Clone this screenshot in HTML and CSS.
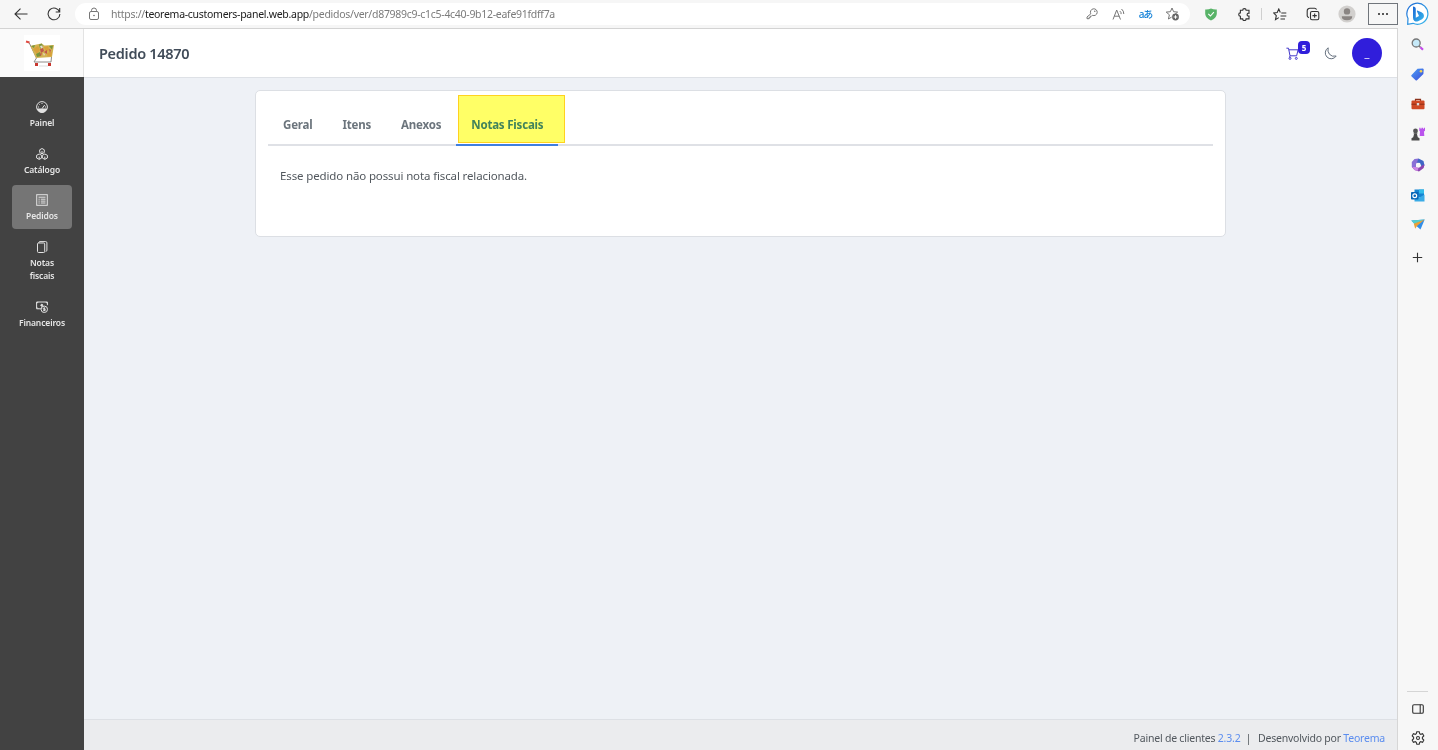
FILE: index.html
```html
<!DOCTYPE html>
<html lang="pt-BR">

<head>
    <meta charset="UTF-8">
    <meta name="viewport" content="width=device-width, initial-scale=1.0">
    <title>Pedido 14870</title>
    <link rel="stylesheet" href="styles.css">
</head>

<body>
    <div class="window">
        <!-- Browser toolbar -->
        <header class="toolbar">
            <span class="tool"><svg width="14" height="12" viewBox="0 0 14 12"><path d="M13.500 6H1M6.500 .7L1 6l5.500 5.300"/></svg></span>
            <span class="tool reload"><svg width="14" height="14" viewBox="0 0 14 14"><path d="M12.600 5A5.900 5.900 0 1 0 12.900 7M12.700 1v4H8.700"/></svg></span>
            <div class="address">
                <svg class="lock" width="12" height="14" viewBox="0 0 12 14"><rect x="1.500" y="4.500" width="9" height="8" rx="1.500"/><path d="M3.500 4.500V3.500a2.500 2.500 0 0 1 5 0v1"/><circle class="fill" cx="6" cy="8.500" r=".8"/></svg>
                <span class="url">https://<b>teorema-customers-panel.web.app</b>/pedidos/ver/d87989c9-c1c5-4c40-9b12-eafe91fdff7a</span>
                <span class="action"><svg width="12" height="12" viewBox="0 0 12 12"><path d="M4.800 5.800A3.400 3.400 0 1 1 6.400 7.300L5.500 8.200H4.400v1.200H3.200v1.300H1V9z"/><circle class="fill" cx="8.800" cy="3.200" r=".7"/></svg></span>
                <span class="action"><svg width="13" height="13" viewBox="0 0 13 13"><path d="M1 11.500L4.700 2l3.800 9.500M2.300 8.200h4.900M7.800 3.100a3 3 0 0 1 1.300 3M9.500 1a6 6 0 0 1 2.300 5"/></svg></span>
                <span class="action translate">aあ</span>
                <span class="action"><svg width="15" height="14" viewBox="0 0 15 14"><path d="M7 1l1.600 3.700 4 .4-2.800 2.400M7 1L5.400 4.700l-4.200.4 3.200 2.700-1 4.200 3.200-1.900"/><circle class="fill" cx="10.500" cy="10" r="3.400"/><path class="light" d="M10.500 8.200v3.600M8.700 10h3.600"/></svg></span>
            </div>
            <span class="tool"><svg width="12" height="13" viewBox="0 0 12 13"><path class="shield" d="M6 0.500Q8.500 1.700 11.800 1.500V6Q11.300 10.300 6 12.500Q.7 10.300.2 6V1.500Q3.500 1.700 6 .5z"/><path class="check" d="M3.300 5.900l2.100 2.100 3.500-3.900"/></svg></span>
            <span class="tool"><svg width="13" height="13" viewBox="0 0 13 13"><path d="M4.700 2.300a1.700 1.700 0 0 1 3.400 0H11v2.900a1.500 1.500 0 1 0 0 2.900v2.800H8.100a1.700 1.700 0 0 1-3.400 0H2.400V8.300a1.700 1.700 0 0 1 0-3.400V2.300z"/></svg></span>
            <span class="divider"></span>
            <span class="tool"><svg width="14" height="13" viewBox="0 0 14 13"><path d="M7.300 4.500L5.800 1 4.200 4.500l-3.500.4L3.300 7.600l-.8 4 3.300-2M8.300 5h5M7.500 8h5.800M7.500 11h4.500"/></svg></span>
            <span class="tool"><svg width="14" height="14" viewBox="0 0 14 14"><rect x="4.500" y="4.500" width="8.300" height="8.300" rx="1.500"/><path d="M3 10.500A2 2 0 0 1 1.200 8.300V4A2.700 2.700 0 0 1 4 1.200h4.500a2 2 0 0 1 2 1.500M8.650 6.500v4.300M6.500 8.650h4.300"/></svg></span>
            <span class="tool"><svg width="18" height="18" viewBox="0 0 18 18"><circle class="face" cx="9" cy="9" r="8.600"/><circle class="person" cx="9" cy="6.400" r="3.200"/><path class="person" d="M3.800 11.200h10.400q.3 4-5.200 4t-5.200-4z"/></svg></span>
            <span class="more"><i></i><i></i><i></i></span>
        </header>

        <!-- Customer panel -->
        <div class="app">
            <nav class="sidebar">
                <div class="logo">
                    <div class="logo-image">
                        <svg width="36" height="36" viewBox="0 0 36 36">
                            <path class="cart-frame" d="M5 7.500L12.500 23l-2.500 4h17M27.500 22l-.5 5"/>
                            <path class="cart-handle" d="M2 6.500l3.500 1"/>
                            <path class="food-yellow" d="M6.500 11l6-1.500 5-1 3 2 9.500-.5-2 12-16 1z"/>
                            <path class="food-orange" d="M9 14l5-3 2 4-3 4zM20 12l4-1 1 4-3 2zM23 18l5-1-.5 4-4 .500z"/>
                            <path class="food-green" d="M7 11l4-1-1 3zM15 9.500l3-1 1 4-3 1zM25 11l4-.5-1 4zM12 19l4-2 1 4-4 1z"/>
                            <path class="food-red" d="M16 14l3-1 1 3-3 2zM20 17l3-2v4zM15 19l3-1-1 3zM25 14l2 1-1 3z"/>
                            <path class="food-white" d="M16 11l2-.5 1 2-2 1zM19 18l2 1-1 2z"/>
                            <path class="cart-wheel" d="M11 28h3v3h-3zM24 28h3v3h-3z"/>
                            <path class="cart-shadow" d="M15 31h9"/>
                        </svg>
                    </div>
                </div>
                <ul class="menu">
                    <li><svg viewBox="0 0 12 12"><circle cx="6" cy="6" r="5.400"/><path class="fill" d="M1.200 8h9.600Q9.200 11.400 6 11.400T1.200 8z"/><path d="M6 7.600L8.700 4M6 2v1M3.200 3.200l.6.6M2 6h1M9 6h1"/></svg><span>Painel</span></li>
                    <li><svg viewBox="0 0 12 12"><path d="M6 .5l2.300 1.300v2.700L6 5.800 3.700 4.500V1.800zM3.200 6l2.500 1.300V10l-2.500 1.400L.6 10V7.300zM8.800 6l2.600 1.300V10l-2.600 1.400L6.300 10V7.300zM6 3v2.500M3.200 8.600v2.600M8.800 8.600v2.600"/></svg><span>Catálogo</span></li>
                    <li class="active"><svg viewBox="0 0 12 12"><rect x=".7" y=".7" width="10.600" height="10.600"/><path d="M2.500 3.200h7M2.500 5.200h1.200M4.800 5.200h4.700M2.500 7.100h1.200M4.800 7.100h4.700M2.500 9h1.200M4.800 9h4.700"/></svg><span>Pedidos</span></li>
                    <li><svg viewBox="0 0 12 12"><rect x="1.500" y="2" width="7.200" height="9.500" rx="1"/><path d="M2.700 1.900Q2.800.6 4 .6h5.700q1.200 0 1.200 1.200v7.400q0 1.100-1.200 1.300"/></svg><span>Notas fiscais</span></li>
                    <li><svg viewBox="0 0 12 12"><path d="M5 7.800H.6V1h10.800v3.200M.6 2.600L2.200 1M9.800 1l1.600 1.600M.6 6.200l1.600 1.600"/><circle class="fill" cx="5.800" cy="4.300" r="1"/><circle cx="8.300" cy="8.300" r="3.200"/><path d="M9.300 7.100H8q-.8 0-.8.600t.8.600h.7q.8 0 .8.600t-.8.600H7.300M8.300 6.500v3.700"/></svg><span>Financeiros</span></li>
                </ul>
            </nav>

            <div class="page">
                <div class="page-header">
                    <h1>Pedido 14870</h1>
                    <div class="cart">
                        <svg width="13" height="13" viewBox="0 0 13 13"><path d="M.4 1.200h2.100l1.500 7.600h6.600l1.500-6H2.900M4 8.800l-.4 1.300"/><circle cx="4" cy="11.400" r="1"/><circle cx="10.300" cy="11.400" r="1"/></svg>
                        <span class="badge">5</span>
                    </div>
                    <svg class="moon" width="13" height="13" viewBox="0 0 13 13"><path d="M4.200.8A5.900 5.900 0 1 0 12.200 9Q7.900 10.200 5.400 7.200 3.200 4.400 4.200.8z"/></svg>
                    <div class="avatar">_</div>
                </div>

                <main class="content">
                    <section class="card">
                        <div class="tabs">
                            <a class="tab">Geral</a>
                            <a class="tab">Itens</a>
                            <a class="tab">Anexos</a>
                            <a class="tab selected">Notas Fiscais</a>
                        </div>
                        <p class="message">Esse pedido não possui nota fiscal relacionada.</p>
                    </section>
                </main>

                <footer class="footer">
                    <span>Painel de clientes <a>2.3.2</a></span>
                    <span class="bar">|</span>
                    <span>Desenvolvido por <a>Teorema</a></span>
                </footer>
            </div>
        </div>
    </div>

    <!-- Browser side bar -->
    <aside class="rail">
        <svg class="bing" width="24" height="24" viewBox="0 0 24 24">
            <defs>
                <linearGradient id="bing" x1="0" y1="0" x2="1" y2="1"><stop offset="0" stop-color="#1b67d4"/><stop offset="1" stop-color="#38b9ec"/></linearGradient>
                <linearGradient id="tag" x1="0" y1="0" x2="1" y2="1"><stop offset="0" stop-color="#4ba0f5"/><stop offset="1" stop-color="#3d4bd8"/></linearGradient>
            </defs>
            <path d="M1.700 22.300l.3-5.800A10.500 10.500 0 1 1 7 21.300z" fill="#fff" stroke="url(#bing)" stroke-width="1.200"/>
            <path d="M7 4.500q2.800.2 2.800 2.700v8.600L13 14l-2-4.500q-.4-1.300 1-.8l3.500 1.500q2.500 1.200 2.500 3.800 0 2-2 3.200l-4 2q-2 .8-3.500-.3Q7 18 7 15.800z" fill="url(#bing)"/>
        </svg>
        <svg width="13" height="13" viewBox="0 0 13 13"><circle cx="5.200" cy="5" r="4" fill="#c5e9f8" stroke="#777" stroke-width="1.300"/><path d="M8 8l1.500 1.400" stroke="#777" stroke-width="1.500"/><path d="M9.400 9.300l2.600 2.500" stroke="#c34be8" stroke-width="2.200"/></svg>
        <svg width="13" height="13" viewBox="0 0 13 13"><path d="M6.500.8L12 .5l.7.7L12.400 6 6 12.300q-.7.600-1.400 0L.6 8.400q-.7-.7 0-1.400z" fill="url(#tag)"/><circle cx="10" cy="3.200" r="1.300" fill="#f6d34a"/></svg>
        <svg width="14" height="12" viewBox="0 0 14 12"><path d="M4.500 3V1.300h5V3" fill="none" stroke="#8c321b" stroke-width="1.200"/><rect x=".5" y="2.600" width="13" height="8.600" rx="1" fill="#cf4925"/><path d="M.5 6.200h13" stroke="#8f2d17"/><rect x="5.800" y="5" width="2.400" height="2.400" fill="#ddd"/></svg>
        <svg width="14" height="14" viewBox="0 0 14 14"><path d="M8.300.8h1.200v1h1v-1H12v1h.9V.8H14v3l-1 .8.300 4.400H8.700L9 4.600l-.7-.8z" fill="#ba54ed"/><circle cx="4.500" cy="4" r="2.400" fill="#555"/><path d="M2.500 6.200h4L6 7.300l.8 3 1.700 1V13.500H.5v-2.200l1.700-1 .8-3z" fill="#4a4a4a"/></svg>
        <svg width="14" height="14" viewBox="0 0 14 14"><path d="M7.500.5L3.500 1 .8 4v5l2.700 2.200L5 9V5.500L8.500 4z" fill="#8a6fd6"/><path d="M7.500.5l5 2.500 1 4.500-3 1L9 5 6 4.500z" fill="#3f66c6"/><path d="M13.500 6.500L12.700 10 8 13.500 3.500 12 1 9l4 .5 3 .3 3-2.300z" fill="#8d46b0"/><path d="M1 9l4 0 2.500 1.500L6.500 13 3.500 12z" fill="#cc85e4"/></svg>
        <svg width="14" height="13" viewBox="0 0 14 13"><rect x="3.500" y=".5" width="9.500" height="8" fill="#1683d2"/><path d="M8 .5h5v4H8z" fill="#32bce9"/><path d="M3.500 5.500l5 3 5-3v7h-10z" fill="#3aabe6"/><rect y="3" width="7.500" height="7.500" rx=".7" fill="#0867b7"/><circle cx="3.750" cy="6.750" r="1.900" fill="none" stroke="#fff" stroke-width="1.200"/></svg>
        <svg width="14" height="12" viewBox="0 0 14 12"><path d="M.3 1.500L13.700.5 9.500 10.500 6 7.500z" fill="#308de9"/><path d="M.3 1.500L13.700.5 3.500 5z" fill="#55ceca"/><path d="M2.800 4.700L13.700.5 6 7l-1.800 2.700z" fill="#eba137"/></svg>
        <svg class="plus" width="11" height="11" viewBox="0 0 11 11"><path class="line" d="M5.500.8v9.400M.8 5.500h9.400"/></svg>
        <hr>
        <svg width="12" height="10" viewBox="0 0 12 10"><rect class="line" x=".7" y=".7" width="10.600" height="8.600" rx="1.300"/><path class="line" d="M8.200.7v8.600"/></svg>
        <svg class="gear" width="14" height="14" viewBox="0 0 14 14"><path class="line" d="M5.800.8h2.400l.5 1.900 1 .6 1.900-.6 1.200 2.100-1.400 1.500v1.400l1.400 1.500-1.200 2.100-1.900-.6-1 .6-.5 1.900H5.800l-.5-1.900-1-.6-1.900.6-1.200-2.100 1.400-1.500V6.300L1.200 4.800l1.200-2.100 1.900.6 1-.6z"/><circle class="line" cx="7" cy="7" r="1.500"/></svg>
    </aside>
</body>

</html>
```

FILE: styles.css
```css
/* Body styling */
*,
*::after {
    box-sizing: border-box;
}

body {
    display: flex;
    height: 750px;
    margin: 0;
    overflow: hidden;
    font-family: "Noto Sans", "Open Sans", sans-serif;
    font-size: 11px;
    color: #52585e;
    background-color: #f7f7f7;
}

svg {
    display: block;
    flex: none;
}

/* Browser toolbar */
.window {
    display: flex;
    flex-direction: column;
    width: 1398px;
}

.toolbar {
    display: flex;
    align-items: center;
    height: 29px;
    padding-left: 4px;
    background-color: #f6f6f6;
    border-bottom: 1px solid #d3d3d3;
}

.toolbar svg {
    fill: none;
    stroke: #333;
    stroke-width: 1.1;
}

.tool {
    display: flex;
    justify-content: center;
    width: 33.500px;
}

.address {
    display: flex;
    align-items: center;
    width: 1115px;
    height: 22px;
    margin: 0 4px;
    padding: 0 4px 0 13px;
    border-radius: 11px;
    background-color: #fff;
}

.address svg {
    stroke: #767676;
    stroke-width: 1;
}

.url {
    flex: 1;
    margin-left: 11px;
    font-size: 10.500px;
    letter-spacing: -0.285px;
    color: #7b7b7b;
    white-space: nowrap;
}

.url b {
    font-weight: 400;
    color: #202020;
}

.action {
    display: flex;
    justify-content: center;
    width: 27px;
}

.translate {
    font: 500 10px/12px "Noto Sans", "Noto Sans CJK JP", sans-serif;
    letter-spacing: -1px;
    color: #1683d8;
}

.toolbar .fill {
    fill: #666;
    stroke: none;
}

.toolbar .light,
.toolbar .check {
    stroke: #fff;
}

.toolbar .shield {
    fill: #58b368;
    stroke: none;
}

.toolbar .face {
    fill: #d2d0ce;
    stroke: none;
}

.toolbar .person {
    fill: #8a8583;
    stroke: none;
}

.divider {
    width: 1px;
    height: 12px;
    margin-right: 1px;
    background-color: #cfcfcf;
}

.more {
    display: flex;
    align-items: center;
    justify-content: center;
    gap: 2px;
    width: 30px;
    height: 22px;
    margin-left: auto;
    border: 1px solid #70757b;
}

.more i {
    width: 2px;
    height: 2px;
    border-radius: 50%;
    background-color: #222;
}

/* App layout */
.app {
    display: flex;
    flex: 1;
}

.sidebar {
    width: 84px;
    background-color: #424242;
}

.logo {
    display: flex;
    align-items: center;
    justify-content: center;
    height: 48px;
    background-color: #fafafa;
    border-right: 1px solid #e3e3e3;
}

.logo-image {
    background-color: #fff;
}

.logo svg {
    fill: none;
}

.cart-handle {
    stroke: #e04b42;
    stroke-width: 2;
}

.cart-frame {
    stroke: #8f8b88;
}

.food-orange {
    fill: #d9a13a;
}

.food-green {
    fill: #78963c;
}

.food-yellow {
    fill: #d3b352;
}

.food-red {
    fill: #c0584a;
}

.food-white {
    fill: #e6ddd0;
}

.cart-wheel {
    fill: #c9372f;
}

.cart-shadow {
    stroke: #ddd;
}

/* Side menu */
.menu {
    display: flex;
    flex-direction: column;
    gap: 3px;
    margin: 0;
    padding: 15px 12px;
    list-style: none;
}

.menu li {
    display: flex;
    flex-direction: column;
    align-items: center;
    padding: 9px 6px 6px;
    border-radius: 4px;
    font-size: 8.500px;
    font-weight: 600;
    line-height: 13.500px;
    letter-spacing: -0.120px;
    text-align: center;
    color: #e6e6e6;
}

.menu svg {
    width: 12px;
    height: 12px;
    margin-bottom: 3px;
    fill: none;
    stroke: #e2e2e2;
    stroke-width: 1;
}

.menu .fill {
    fill: #e2e2e2;
}

.menu .active {
    background-color: #757575;
}

/* Page header */
.page {
    display: flex;
    flex: 1;
    flex-direction: column;
    background-color: #eef1f6;
    border-right: 1px solid #d6d6d6;
}

.page-header {
    display: flex;
    align-items: center;
    height: 49px;
    padding: 0 15px;
    background-color: #fff;
    border-bottom: 1px solid #dee1e6;
}

h1 {
    flex: 1;
    margin: 0;
    font-size: 14.500px;
    font-weight: 600;
    letter-spacing: -0.300px;
    color: #414c59;
}

.cart {
    position: relative;
    margin-right: 25px;
}

.cart svg {
    fill: none;
    stroke: #4338ca;
}

.badge {
    position: absolute;
    top: -6px;
    left: 12px;
    width: 12px;
    height: 13px;
    border-radius: 4px;
    background-color: #301edb;
    font-size: 8px;
    font-weight: 700;
    line-height: 13px;
    text-align: center;
    color: #fff;
}

.moon {
    margin-right: 15px;
    fill: none;
    stroke: #66717f;
}

.avatar {
    width: 30px;
    height: 30px;
    border-radius: 50%;
    background-color: #301edb;
    line-height: 30px;
    text-align: center;
    color: #fff;
}

/* Order card */
.content {
    flex: 1;
    padding-top: 12px;
}

.card {
    width: 971px;
    height: 147px;
    margin-left: 171px;
    padding: 12px;
    background-color: #fff;
    border: 1px solid #dcdfe4;
    border-radius: 5px;
}

.tabs {
    display: flex;
    height: 43px;
    border-bottom: 2px solid #dfe1e6;
}

.tab {
    height: 43px;
    padding: 0 15px;
    font-size: 11.500px;
    font-weight: 700;
    line-height: 43px;
    letter-spacing: -0.200px;
    color: #6c757d;
}

.selected {
    position: relative;
    border-bottom: 2px solid #3f7fe0;
    color: #4183e2;
}

/* Marker over the selected tab */
.selected::after {
    content: "";
    position: absolute;
    top: -8px;
    left: 2px;
    width: 107px;
    height: 48px;
    background-color: #ffff66;
    border: 1px solid #ffd21f;
    mix-blend-mode: multiply;
}

.message {
    margin: 21px 12px;
    font-size: 11.500px;
    line-height: 18px;
    letter-spacing: -0.130px;
}

/* Footer */
.footer {
    display: flex;
    align-items: center;
    justify-content: flex-end;
    height: 31px;
    padding: 5px 12px 0 0;
    background-color: #ebecee;
    border-top: 1px solid #dde0e5;
    font-size: 10.500px;
    letter-spacing: -0.210px;
}

.footer a {
    color: #5b8def;
}

.bar {
    margin: 0 7px 0 5px;
}

/* Browser side bar */
.rail {
    display: flex;
    flex-direction: column;
    align-items: center;
    gap: 17px;
    width: 40px;
    padding: 2px 1px 5px 0;
}

.rail .bing {
    margin-bottom: -5px;
}

.rail .line {
    fill: none;
    stroke: #333;
    stroke-width: 1.1;
}

.plus {
    margin-top: 4px;
}

.rail hr {
    width: 21px;
    height: 1px;
    margin: auto 0 -5px;
    border: 0;
    background-color: #d5d5d5;
}
```
